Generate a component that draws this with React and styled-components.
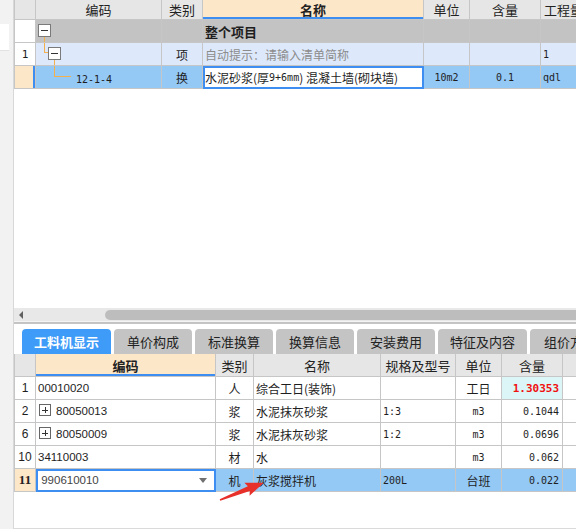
import React from 'react';
import styled, { createGlobalStyle } from 'styled-components';

const colors = {
  grid: '#c6c6c6',
  header: '#e6e6e6',
  orange: '#fde7c9',
  blue: '#3d8ef0',
  select: '#94c8f5',
  pale: '#dde9fb',
  group: '#c3c3c3',
  cyan: '#dcf6f7',
  tab: '#c4c4c4',
  tabActive: '#3f9bf8',
  tree: '#f5b04e',
  text: '#1e1e1e',
  hint: '#8c8c8c',
  red: '#f01010',
};

const TOP_COLS = '22px 126px 41px 221px 46px 71px 46px';
const BOTTOM_COLS = '22px 180px 38px 127px 75px 46px 61px 40px';

const GlobalStyle = createGlobalStyle`
  html, body {
    margin: 0;
    padding: 0;
    background: #fff;
  }
  body {
    font-family: "Noto Sans CJK SC", "Liberation Sans", sans-serif;
    font-size: 12px;
    color: ${colors.text};
  }
`;

const Page = styled.div`
  position: relative;
  display: flex;
  width: 576px;
  height: 529px;
  overflow: hidden;
  background: #fff;
`;

const SideStrip = styled.div`
  width: 14px;
  flex-shrink: 0;
  box-sizing: border-box;
  background: #f2f2f2;
  border-right: 1px solid #d8d8d8;
  padding-top: 24px;
`;

const SideTab = styled.div`
  width: 9px;
  height: 26px;
  background: #fff;
  border-bottom: 1px solid #e2e2e2;
`;

const Main = styled.div`
  flex: 1;
  min-width: 0;
  display: flex;
  flex-direction: column;
  overflow: hidden;
`;

const TopPanel = styled.div`
  height: 308px;
  flex-shrink: 0;
  overflow: hidden;
`;

const Row = styled.div`
  display: grid;
  grid-template-columns: ${(p) => p.$cols};
  height: ${(p) => p.$h || 23}px;
`;

const Cell = styled.div`
  position: relative;
  box-sizing: border-box;
  display: flex;
  align-items: center;
  justify-content: ${(p) => (p.$align === 'left' ? 'flex-start' : p.$align === 'right' ? 'flex-end' : 'center')};
  padding: 0 ${(p) => (p.$align === 'right' ? 3 : 2)}px;
  border-right: 1px solid ${colors.grid};
  border-bottom: 1px solid ${colors.grid};
  border-left: ${(p) => (p.$first ? `1px solid ${colors.grid}` : 'none')};
  background: ${(p) => p.$bg || 'transparent'};
  color: ${(p) => p.$color || colors.text};
  font-weight: ${(p) => (p.$bold ? 700 : 400)};
  font-size: ${(p) => p.$size || 12}px;
  white-space: nowrap;
  overflow: hidden;
  outline: ${(p) => (p.$edit ? `2px solid ${colors.blue}` : 'none')};
  outline-offset: -2px;
  box-shadow: ${(p) => (p.$mark ? `inset -2px 0 0 ${colors.blue}` : 'none')};
`;

const HeadCell = styled(Cell)`
  font-size: 13px;
  color: #222;
  background: ${(p) => (p.$active ? colors.orange : colors.header)};
  font-weight: ${(p) => (p.$active ? 700 : 400)};
  box-shadow: ${(p) => (p.$active ? `inset 0 -2px 0 ${colors.blue}` : 'none')};
`;

const Mono = styled.span`
  font-family: "DejaVu Sans Mono", "Liberation Mono", monospace;
  font-size: ${(p) => p.$size || 10}px;
  font-weight: ${(p) => (p.$bold ? 700 : 400)};
`;

const Code = styled.span`
  font-family: "Liberation Sans", Arial, sans-serif;
  font-size: 11.5px;
  color: ${(p) => p.$color || colors.text};
`;

const RowNo = styled.span`
  font-family: ${(p) => (p.$bold ? '"Liberation Serif", serif' : '"Liberation Sans", Arial, sans-serif')};
  font-size: ${(p) => (p.$bold ? 13 : 12)}px;
  font-weight: ${(p) => (p.$bold ? 700 : 400)};
`;

const Expander = styled.span`
  position: relative;
  flex-shrink: 0;
  box-sizing: border-box;
  width: ${(p) => p.$s || 13}px;
  height: ${(p) => p.$s || 13}px;
  margin-left: ${(p) => p.$indent || 0}px;
  margin-right: ${(p) => p.$gap || 0}px;
  margin-top: -2px;
  background: #fff;
  border: 1px solid ${(p) => p.$line || '#7a7a7a'};
  &::before {
    content: '';
    position: absolute;
    left: 2px;
    right: 2px;
    top: 50%;
    height: 1px;
    margin-top: -0.5px;
    background: #333;
  }
  &::after {
    content: ${(p) => (p.$plus ? "''" : 'none')};
    position: absolute;
    top: 2px;
    bottom: 2px;
    left: 50%;
    width: 1px;
    margin-left: -0.5px;
    background: #333;
  }
`;

const TreeLines = styled.svg`
  position: absolute;
  left: 0;
  top: 0;
  width: 100%;
  height: 100%;
  pointer-events: none;
  overflow: visible;
`;

const Tree = ({ d }) => (
  <TreeLines>
    <path d={d} stroke={colors.tree} strokeWidth="1" fill="none" shapeRendering="crispEdges" />
  </TreeLines>
);

const TreeLabel = styled.span`
  margin-left: 38px;
`;

const Caret = styled.span`
  margin-left: auto;
  margin-right: 6px;
  width: 0;
  height: 0;
  border-left: 4px solid transparent;
  border-right: 4px solid transparent;
  border-top: 5px solid #707070;
`;

const HScroll = styled.div`
  height: 13px;
  flex-shrink: 0;
  display: flex;
  align-items: center;
  background: #e8e8e8;
`;

const ScrollArrow = styled.span`
  margin-left: 5px;
  width: 0;
  height: 0;
  border-top: 4px solid transparent;
  border-bottom: 4px solid transparent;
  border-right: 4px solid #606060;
`;

const ScrollThumb = styled.span`
  margin-left: 82px;
  flex: 1;
  height: 10px;
  background: #bdbdbd;
  border-radius: 5px 0 0 5px;
`;

const Splitter = styled.div`
  height: 2px;
  flex-shrink: 0;
  border-top: 1px solid #f4f4f4;
  background: #c4c4c4;
`;

const BottomPanel = styled.div`
  flex: 1;
  display: flex;
  flex-direction: column;
  border-bottom: 1px solid #dadada;
  overflow: hidden;
`;

const TabBar = styled.div`
  display: flex;
  gap: 3px;
  padding: 5px 0 0 8px;
  flex-shrink: 0;
`;

const Tab = styled.div`
  flex-shrink: 0;
  width: ${(p) => p.$w}px;
  height: 25px;
  line-height: 25px;
  text-align: center;
  font-size: 13px;
  border-radius: 4px 4px 0 0;
  background: ${(p) => (p.$active ? colors.tabActive : colors.tab)};
  color: ${(p) => (p.$active ? '#fff' : '#222')};
  font-weight: ${(p) => (p.$active ? 700 : 400)};
  white-space: nowrap;
  overflow: hidden;
`;

const Arrow = styled.svg`
  position: absolute;
  left: 212px;
  top: 470px;
  width: 60px;
  height: 40px;
  pointer-events: none;
`;

const tabs = [
  { label: '工料机显示', w: 89, active: true },
  { label: '单价构成', w: 78 },
  { label: '标准换算', w: 78 },
  { label: '换算信息', w: 78 },
  { label: '安装费用', w: 78 },
  { label: '特征及内容', w: 89 },
  { label: '组价方案', w: 80 },
];

const materials = [
  { no: '1', code: '00010020', type: '人', name: '综合工日(装饰)', spec: '', unit: '工日', qty: '1.30353', hot: true },
  { no: '2', code: '80050013', type: '浆', name: '水泥抹灰砂浆', spec: '1:3', unit: 'm3', qty: '0.1044', plus: true },
  { no: '6', code: '80050009', type: '浆', name: '水泥抹灰砂浆', spec: '1:2', unit: 'm3', qty: '0.0696', plus: true },
  { no: '10', code: '34110003', type: '材', name: '水', spec: '', unit: 'm3', qty: '0.062' },
];

const isAscii = (s) => /^[\x20-\x7e]*$/.test(s);

const UnitText = ({ value }) => (isAscii(value) ? <Mono>{value}</Mono> : <span>{value}</span>);

const TopTable = () => (
  <>
    <Row $cols={TOP_COLS} $h={20}>
      <HeadCell $first />
      <HeadCell>编码</HeadCell>
      <HeadCell>类别</HeadCell>
      <HeadCell $active>名称</HeadCell>
      <HeadCell>单位</HeadCell>
      <HeadCell>含量</HeadCell>
      <HeadCell>工程量</HeadCell>
    </Row>
    <Row $cols={TOP_COLS}>
      <Cell $first $bg="#fff" />
      <Cell $align="left" $bg={colors.group}>
        <Tree d="M8.5 17 V23" />
        <Expander />
      </Cell>
      <Cell $bg={colors.group} />
      <Cell $align="left" $bg={colors.group} $bold $size={13}>整个项目</Cell>
      <Cell $bg={colors.group} />
      <Cell $bg={colors.group} />
      <Cell $bg={colors.group} />
    </Row>
    <Row $cols={TOP_COLS}>
      <Cell $first $bg="#fff"><Mono $size={11}>1</Mono></Cell>
      <Cell $align="left" $bg={colors.pale}>
        <Tree d="M8.5 -1 V9.5 H12 M18.5 17 V23" />
        <Expander $indent={10} />
      </Cell>
      <Cell $bg={colors.pale}>项</Cell>
      <Cell $align="left" $bg={colors.pale} $color={colors.hint}>自动提示：请输入清单简称</Cell>
      <Cell $bg={colors.pale} />
      <Cell $bg={colors.pale} />
      <Cell $align="left" $bg={colors.pale}><Mono>1</Mono></Cell>
    </Row>
    <Row $cols={TOP_COLS}>
      <Cell $first $bg={colors.orange} $mark />
      <Cell $align="left" $bg={colors.select}>
        <Tree d="M18.5 -1 V10.5 H35" />
        <TreeLabel><Mono>12-1-4</Mono></TreeLabel>
      </Cell>
      <Cell $bg={colors.select}>换</Cell>
      <Cell $align="left" $bg="#fff" $edit>
        水泥砂浆(厚<Mono>9+6mm</Mono>) 混凝土墙(砌块墙)
      </Cell>
      <Cell $bg={colors.select}><Mono>10m2</Mono></Cell>
      <Cell $bg={colors.select}><Mono>0.1</Mono></Cell>
      <Cell $align="left" $bg={colors.select}><Mono>qdl</Mono></Cell>
    </Row>
  </>
);

const MaterialTable = () => (
  <>
    <Row $cols={BOTTOM_COLS}>
      <HeadCell $first />
      <HeadCell $active>编码</HeadCell>
      <HeadCell>类别</HeadCell>
      <HeadCell>名称</HeadCell>
      <HeadCell>规格及型号</HeadCell>
      <HeadCell>单位</HeadCell>
      <HeadCell>含量</HeadCell>
      <HeadCell />
    </Row>
    {materials.map((m) => (
      <Row $cols={BOTTOM_COLS} key={m.no}>
        <Cell $first><RowNo>{m.no}</RowNo></Cell>
        <Cell $align="left">
          {m.plus && <Expander $plus $s={12} $indent={1} $gap={5} $line="#666" />}
          <Code>{m.code}</Code>
        </Cell>
        <Cell>{m.type}</Cell>
        <Cell $align="left">{m.name}</Cell>
        <Cell $align="left"><Mono>{m.spec}</Mono></Cell>
        <Cell><UnitText value={m.unit} /></Cell>
        <Cell $align="right" $bg={m.hot ? colors.cyan : undefined} $color={m.hot ? colors.red : undefined}>
          <Mono $bold={m.hot} $size={m.hot ? 11 : 10}>{m.qty}</Mono>
        </Cell>
        <Cell />
      </Row>
    ))}
    <Row $cols={BOTTOM_COLS}>
      <Cell $first $bg={colors.orange}><RowNo $bold>11</RowNo></Cell>
      <Cell $align="left" $bg="#fff" $edit>
        <Code $color="#444">&nbsp;990610010</Code>
        <Caret />
      </Cell>
      <Cell $bg={colors.select}>机</Cell>
      <Cell $align="left" $bg={colors.select}>灰浆搅拌机</Cell>
      <Cell $align="left" $bg={colors.select}><Mono>200L</Mono></Cell>
      <Cell $bg={colors.select}>台班</Cell>
      <Cell $align="right" $bg={colors.select}><Mono>0.022</Mono></Cell>
      <Cell $bg={colors.select} />
    </Row>
  </>
);

const App = () => (
  <Page>
    <GlobalStyle />
    <SideStrip>
      <SideTab />
    </SideStrip>
    <Main>
      <TopPanel>
        <TopTable />
      </TopPanel>
      <HScroll>
        <ScrollArrow />
        <ScrollThumb />
      </HScroll>
      <Splitter />
      <BottomPanel>
        <TabBar>
          {tabs.map((t) => (
            <Tab key={t.label} $w={t.w} $active={t.active}>{t.label}</Tab>
          ))}
        </TabBar>
        <MaterialTable />
      </BottomPanel>
    </Main>
    <Arrow viewBox="0 0 60 40">
      <g transform="translate(8 30) rotate(-21.6)">
        <polygon points="0,-0.8 31,-2.6 29,-7 47,0 29,7 31,2.6 0,0.8" fill="#e8302a" />
      </g>
    </Arrow>
  </Page>
);

export default App;
